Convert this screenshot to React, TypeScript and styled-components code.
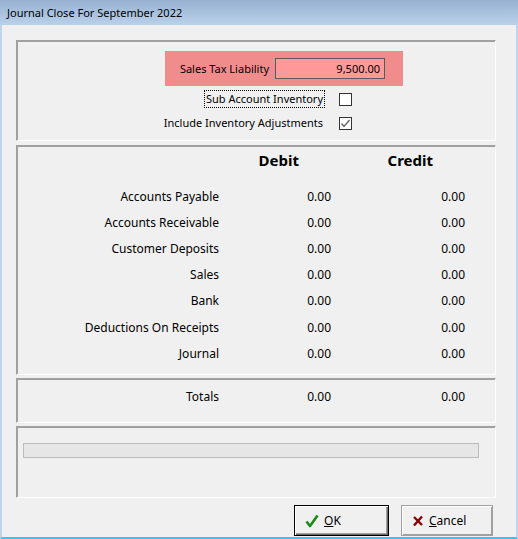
import styled, { createGlobalStyle } from "styled-components";

const GlobalStyle = createGlobalStyle`
    html, body {
        margin: 0;
        padding: 0;
        background: #f0f0f0;
        overflow: hidden;
    }
    * {
        box-sizing: border-box;
    }
`;

const Window = styled.div`
    width: 518px;
    height: 539px;
    display: flex;
    flex-direction: column;
    font-family: "Noto Sans", "Open Sans", sans-serif;
    font-size: 11px;
    color: #000;
    background: #f0f0f0;
`;

const TitleBar = styled.div`
    height: 25px;
    flex: none;
    display: flex;
    align-items: center;
    padding-left: 7px;
    background: linear-gradient(to bottom, #97b1d0, #b9d1ea);
`;

const Frame = styled.div`
    flex: 1;
    display: flex;
    flex-direction: column;
    border-left: 2px solid #c0d5ed;
    border-right: 2px solid #c0d5ed;
    border-bottom: 2px solid #36c4f0;
    padding: 15px 20px 0 14px;
    gap: 3px;
`;

const Group = styled.div<{ $h: number; $pt?: number; $mb?: number }>`
    height: ${(p) => p.$h}px;
    flex: none;
    border-top: 1px solid #a0a0a0;
    border-left: 1px solid #a0a0a0;
    border-right: 1px solid #fff;
    border-bottom: 1px solid #fff;
    box-shadow: 1px 1px 0 #a0a0a0 inset;
    padding-top: ${(p) => p.$pt ?? 0}px;
    margin-bottom: ${(p) => p.$mb ?? 0}px;
    display: flex;
    flex-direction: column;
`;

const TaxBox = styled.div`
    margin: 10px 0 0 148px;
    width: 238px;
    height: 35px;
    background: #f08c8c;
    display: flex;
    align-items: center;
    justify-content: flex-end;
    gap: 6px;
    padding-right: 18px;
`;

const TaxInput = styled.div`
    width: 110px;
    height: 21px;
    background: #ff9999;
    border: 1px solid #5a5a5a;
    display: flex;
    align-items: center;
    justify-content: flex-end;
    padding-right: 4px;
`;

const OptionGrid = styled.div`
    margin-top: 1px;
    display: grid;
    grid-template-columns: 307px 13px;
    column-gap: 15px;
    grid-auto-rows: 24px;
    align-items: center;
`;

const OptionLabel = styled.div<{ $focus?: boolean }>`
    justify-self: end;
    padding: 0 1px;
    line-height: 16px;
    outline: ${(p) => (p.$focus ? "1px dotted #000" : "none")};
`;

const CheckBox = styled.div`
    width: 13px;
    height: 13px;
    background: #fff;
    border: 1px solid #333;
    display: flex;
    align-items: center;
    justify-content: center;
`;

const Table = styled.div<{ $rowH?: number }>`
    display: grid;
    grid-template-columns: 202px 112px 134px;
    grid-auto-rows: ${(p) => p.$rowH ?? 26.2}px;
    align-items: center;
    font-size: 12px;
`;

const HeaderRow = styled(Table)`
    margin-bottom: 13px;
`;

const HeadCell = styled.div`
    font-weight: 700;
    font-size: 15px;
    text-align: right;
    padding-right: 32px;
    line-height: 20px;
`;

const Cell = styled.div`
    text-align: right;
`;

const ProgressTrack = styled.div`
    margin: 16px 0 0 6px;
    width: 456px;
    height: 15px;
    background: #e6e6e6;
    border: 1px solid #bcbcbc;
`;

const ButtonRow = styled.div`
    display: flex;
    justify-content: flex-end;
    gap: 12px;
    margin-top: 4px;
    padding-right: 3px;
`;

const Button = styled.div<{ $w: number; $default?: boolean }>`
    width: ${(p) => p.$w}px;
    height: 31px;
    display: flex;
    align-items: center;
    gap: 5px;
    padding-left: 10px;
    background: #f0f0f0;
    border: 1px solid ${(p) => (p.$default ? "#000" : "#a0a0a0")};
    box-shadow: ${(p) =>
        p.$default
            ? "inset 1px 1px 0 #fff, inset -1px -1px 0 #696969, inset -2px -2px 0 #a0a0a0"
            : "inset 1px 1px 0 #fff, inset -1px -1px 0 #a0a0a0"};
    font-size: 12px;
`;

const Key = styled.span`
    text-decoration: underline;
`;

const rows = [
    "Accounts Payable",
    "Accounts Receivable",
    "Customer Deposits",
    "Sales",
    "Bank",
    "Deductions On Receipts",
    "Journal",
];

function Check({ color }: { color: string }) {
    return (
        <svg width="11" height="11" viewBox="0 0 11 11">
            <path d="M1.5 5.5 L4 8.5 L9.5 2" fill="none" stroke={color} strokeWidth="1.4" />
        </svg>
    );
}

export default function App() {
    return (
        <Window>
            <GlobalStyle />
            <TitleBar>Journal Close For September 2022</TitleBar>
            <Frame>
                <Group $h={101} $mb={1}>
                    <TaxBox>
                        <span>Sales Tax Liability</span>
                        <TaxInput>9,500.00</TaxInput>
                    </TaxBox>
                    <OptionGrid>
                        <OptionLabel $focus>Sub Account Inventory</OptionLabel>
                        <CheckBox />
                        <OptionLabel>Include Inventory Adjustments</OptionLabel>
                        <CheckBox>
                            <Check color="#666" />
                        </CheckBox>
                    </OptionGrid>
                </Group>
                <Group $h={230} $pt={4}>
                    <HeaderRow $rowH={20}>
                        <div />
                        <HeadCell>Debit</HeadCell>
                        <HeadCell>Credit</HeadCell>
                    </HeaderRow>
                    <Table>
                        {rows.map((r) => [
                            <Cell key={r + "l"}>{r}</Cell>,
                            <Cell key={r + "d"}>0.00</Cell>,
                            <Cell key={r + "c"}>0.00</Cell>,
                        ])}
                    </Table>
                </Group>
                <Group $h={45} $pt={4}>
                    <Table $rowH={26}>
                        <Cell>Totals</Cell>
                        <Cell>0.00</Cell>
                        <Cell>0.00</Cell>
                    </Table>
                </Group>
                <Group $h={72}>
                    <ProgressTrack />
                </Group>
                <ButtonRow>
                    <Button $w={95} $default>
                        <svg width="14" height="14" viewBox="0 0 14 14">
                            <path d="M1.5 7.5 L5 12 L12.5 1.5" fill="none" stroke="#1a8a1a" strokeWidth="2.6" strokeLinejoin="round" />
                        </svg>
                        <span>
                            <Key>O</Key>K
                        </span>
                    </Button>
                    <Button $w={92}>
                        <svg width="12" height="12" viewBox="0 0 12 12">
                            <path d="M2 2 L10 10 M10 1.5 L2 10.5" fill="none" stroke="#8b0000" strokeWidth="2.4" />
                        </svg>
                        <span>
                            <Key>C</Key>ancel
                        </span>
                    </Button>
                </ButtonRow>
            </Frame>
        </Window>
    );
}
